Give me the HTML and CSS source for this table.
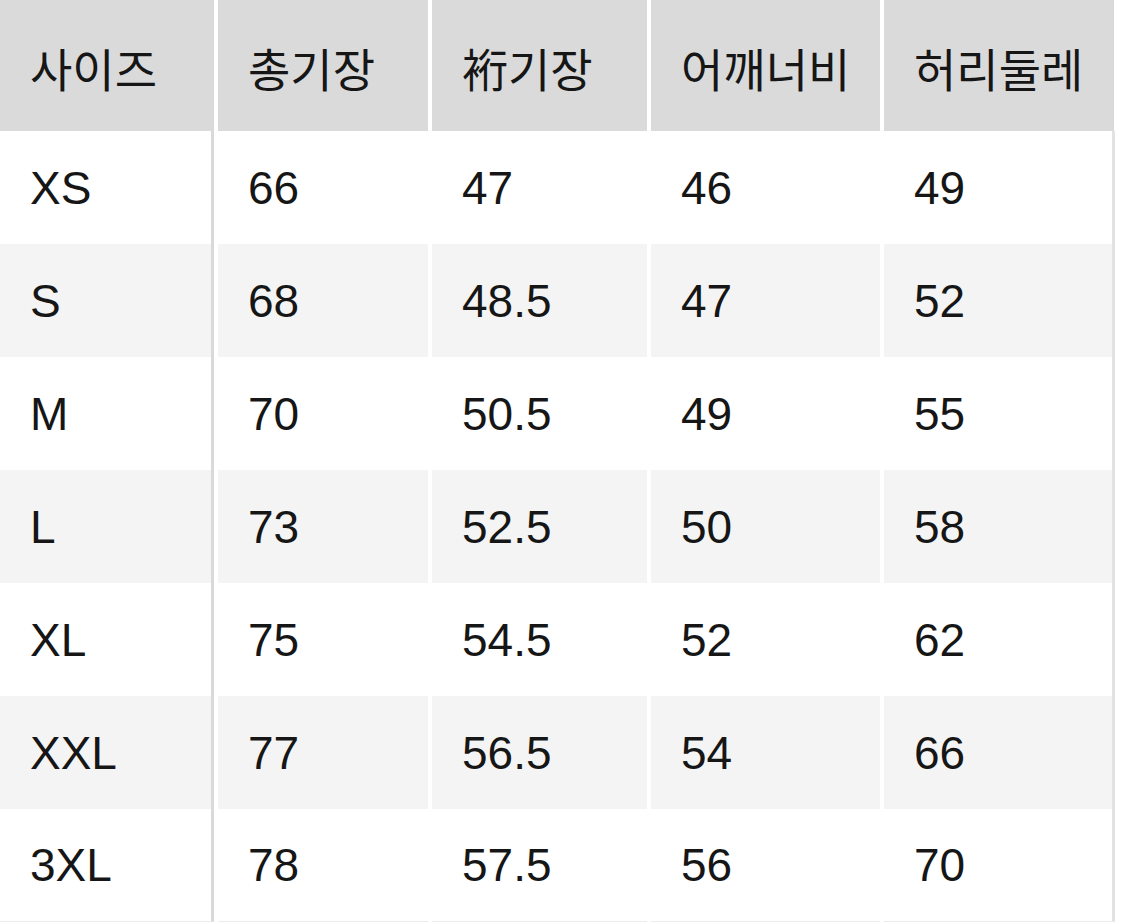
FILE: index.html
```html
<!DOCTYPE html>
<html lang="ko">
<head>
<meta charset="utf-8">
<title>사이즈표</title>
<link rel="stylesheet" href="styles.css">
</head>
<body>
<div class="size-table">
  <div class="row head">
    <div class="cell first">사이즈</div>
    <div class="cell">총기장</div>
    <div class="cell">裄기장</div>
    <div class="cell">어깨너비</div>
    <div class="cell last">허리둘레</div>
  </div>
  <div class="row">
    <div class="cell first">XS</div><div class="cell">66</div><div class="cell">47</div><div class="cell">46</div><div class="cell last">49</div>
  </div>
  <div class="row alt">
    <div class="cell first">S</div><div class="cell">68</div><div class="cell">48.5</div><div class="cell">47</div><div class="cell last">52</div>
  </div>
  <div class="row">
    <div class="cell first">M</div><div class="cell">70</div><div class="cell">50.5</div><div class="cell">49</div><div class="cell last">55</div>
  </div>
  <div class="row alt">
    <div class="cell first">L</div><div class="cell">73</div><div class="cell">52.5</div><div class="cell">50</div><div class="cell last">58</div>
  </div>
  <div class="row">
    <div class="cell first">XL</div><div class="cell">75</div><div class="cell">54.5</div><div class="cell">52</div><div class="cell last">62</div>
  </div>
  <div class="row alt">
    <div class="cell first">XXL</div><div class="cell">77</div><div class="cell">56.5</div><div class="cell">54</div><div class="cell last">66</div>
  </div>
  <div class="row lastrow">
    <div class="cell first">3XL</div><div class="cell">78</div><div class="cell">57.5</div><div class="cell">56</div><div class="cell last">70</div>
  </div>
</div>
</body>
</html>
```
FILE: styles.css
```css
html, body {
  margin: 0;
  padding: 0;
  background: #ffffff;
}

body {
  width: 1125px;
  height: 922px;
  overflow: hidden;
  font-family: "Liberation Sans", "Noto Sans CJK KR", Arial, sans-serif;
  color: #161616;
}

.size-table {
  display: flex;
  flex-direction: column;
}

.row {
  display: grid;
  grid-template-columns: 214px 210px 215px 229px 231px;
  column-gap: 4px;
  height: 113px;
}

.row.head {
  height: 131px;
}

.cell {
  display: flex;
  align-items: center;
  padding-left: 30px;
  font-size: 46px;
  line-height: 1;
  background: #ffffff;
  box-sizing: border-box;
}

.cell.first {
  border-right: 3px solid #d9d9d9;
}

.cell.last {
  border-right: 3px solid #e2e2e2;
}

.row.head .cell {
  background: #dadada;
  font-family: "Noto Sans CJK KR", "Liberation Sans", sans-serif;
  font-size: 46px;
  font-weight: 400;
  letter-spacing: 0;
  padding-top: 2px;
}

.row.head .cell.first {
  border-right-color: #dadada;
}

.row.head .cell.last {
  border-right: none;
  width: 230px;
}

.row.alt .cell {
  background: #f4f4f4;
}

.row.lastrow .cell {
  border-bottom: 1px solid #ececec;
}
```
